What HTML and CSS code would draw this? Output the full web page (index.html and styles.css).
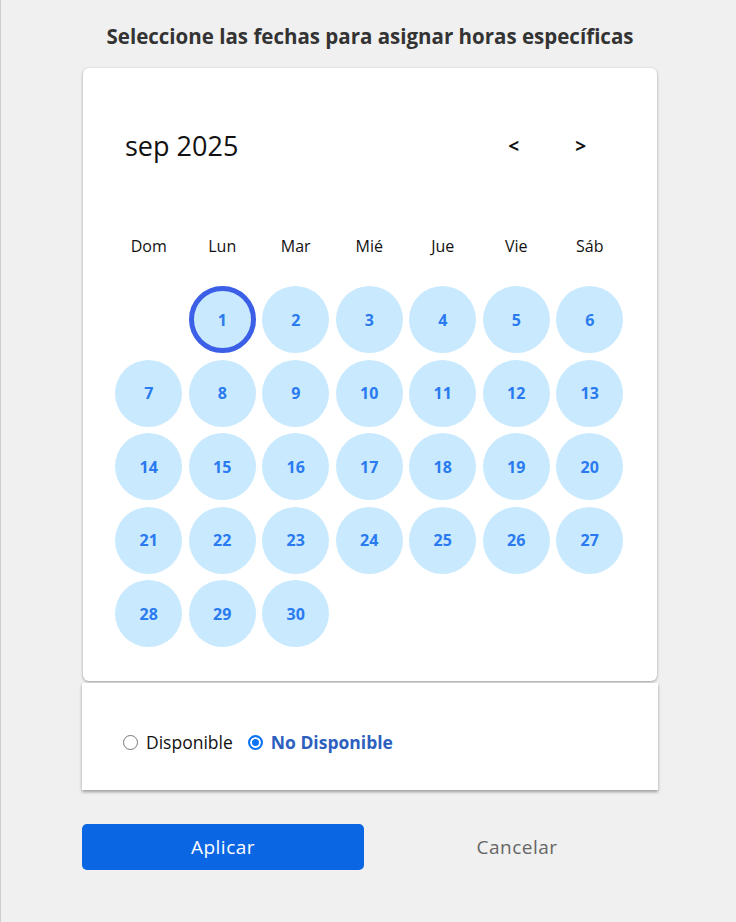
FILE: index.html
```html
<!DOCTYPE html>
<html lang="es">
<head>
<meta charset="utf-8">
<link rel="stylesheet" href="styles.css">
</head>
<body>
<div class="page">
  <div class="panel">
    <h1 class="title">Seleccione las fechas para asignar horas específicas</h1>
    <div class="card calendar">
      <div class="cal-head">
        <span class="month">sep 2025</span>
        <div class="nav">
          <span class="arrow">&lt;</span>
          <span class="arrow">&gt;</span>
        </div>
      </div>
      <div class="grid">
        <div class="wd">Dom</div><div class="wd">Lun</div><div class="wd">Mar</div><div class="wd">Mié</div><div class="wd">Jue</div><div class="wd">Vie</div><div class="wd">Sáb</div>
        <div class="cell"></div>
        <div class="cell"><span class="day today">1</span></div>
        <div class="cell"><span class="day">2</span></div>
        <div class="cell"><span class="day">3</span></div>
        <div class="cell"><span class="day">4</span></div>
        <div class="cell"><span class="day">5</span></div>
        <div class="cell"><span class="day">6</span></div>
        <div class="cell"><span class="day">7</span></div>
        <div class="cell"><span class="day">8</span></div>
        <div class="cell"><span class="day">9</span></div>
        <div class="cell"><span class="day">10</span></div>
        <div class="cell"><span class="day">11</span></div>
        <div class="cell"><span class="day">12</span></div>
        <div class="cell"><span class="day">13</span></div>
        <div class="cell"><span class="day">14</span></div>
        <div class="cell"><span class="day">15</span></div>
        <div class="cell"><span class="day">16</span></div>
        <div class="cell"><span class="day">17</span></div>
        <div class="cell"><span class="day">18</span></div>
        <div class="cell"><span class="day">19</span></div>
        <div class="cell"><span class="day">20</span></div>
        <div class="cell"><span class="day">21</span></div>
        <div class="cell"><span class="day">22</span></div>
        <div class="cell"><span class="day">23</span></div>
        <div class="cell"><span class="day">24</span></div>
        <div class="cell"><span class="day">25</span></div>
        <div class="cell"><span class="day">26</span></div>
        <div class="cell"><span class="day">27</span></div>
        <div class="cell"><span class="day">28</span></div>
        <div class="cell"><span class="day">29</span></div>
        <div class="cell"><span class="day">30</span></div>
      </div>
    </div>
    <div class="card options">
      <label class="opt"><span class="radio"></span><span>Disponible</span></label>
      <label class="opt checked"><span class="radio on"></span><span>No Disponible</span></label>
    </div>
    <div class="actions">
      <button class="btn primary">Aplicar</button>
      <button class="btn ghost">Cancelar</button>
    </div>
  </div>
</div>
</body>
</html>
```

FILE: styles.css
```css
* { box-sizing: border-box; }
html, body { margin: 0; padding: 0; }
body {
  background: #f0f0f0;
  font-family: "Open Sans", "Noto Sans", sans-serif;
  color: #111;
}
.page {
  min-height: 922px;
  border-left: 1px solid #cfcfcf;
  padding-top: 22px;
}
.panel {
  width: 576px;
  margin-left: 81px;
}
.title {
  margin: 0 0 18px;
  font-size: 20.5px;
  font-weight: 700;
  color: #333;
  text-align: center;
  line-height: 28px;
  letter-spacing: 0;
}
.card {
  background: #fff;
}
.calendar {
  margin: 0 1px;
  border-radius: 6px;
  box-shadow: 0 1px 3px rgba(0,0,0,0.35);
  padding: 50px 30px 30px 29px;
}
.cal-head {
  display: flex;
  align-items: center;
  justify-content: space-between;
  padding-left: 13px;
  height: 55px;
}
.month {
  font-size: 27px;
  font-weight: 400;
  color: #111;
}
.nav {
  display: flex;
  gap: 56px;
  padding-right: 41px;
}
.arrow {
  font-size: 19px;
  font-weight: 700;
  color: #111;
}
.grid {
  margin-top: 62px;
  display: grid;
  grid-template-columns: repeat(7, 73.5px);
  grid-auto-rows: 73.5px;
  grid-template-rows: 48px;
}
.wd {
  text-align: center;
  font-size: 16px;
  line-height: 22px;
  color: #111;
}
.cell {
  display: flex;
  align-items: center;
  justify-content: center;
}
.day {
  width: 67px;
  height: 67px;
  border-radius: 50%;
  background: #c9e9fe;
  color: #2a7af0;
  font-weight: 700;
  font-size: 16px;
  display: flex;
  align-items: center;
  justify-content: center;
}
.day.today {
  border: 5px solid #3b5fe6;
}
.options {
  margin-top: 2px;
  height: 107px;
  box-shadow: 0 2px 3px rgba(0,0,0,0.35);
  display: flex;
  align-items: center;
  gap: 15px;
  padding: 12px 0 0 41px;
}
.opt {
  display: flex;
  align-items: center;
  gap: 8px;
  font-size: 17.5px;
  color: #111;
}
.opt.checked {
  color: #2d5fbf;
  font-weight: 700;
}
.radio {
  width: 15px;
  height: 15px;
  border-radius: 50%;
  border: 1px solid #767676;
  background: #fff;
}
.radio.on {
  border: 2px solid #0a74f5;
  box-shadow: inset 0 0 0 2px #fff;
  background: #0a74f5;
}
.actions {
  margin-top: 34px;
  display: flex;
  gap: 12px;
}
.btn {
  flex: 1;
  height: 46px;
  border: none;
  border-radius: 5px;
  font-family: inherit;
  font-size: 19px;
  letter-spacing: 0.5px;
}
.primary {
  background: #0b66e4;
  color: #fff;
}
.ghost {
  background: transparent;
  color: #666;
}
```
